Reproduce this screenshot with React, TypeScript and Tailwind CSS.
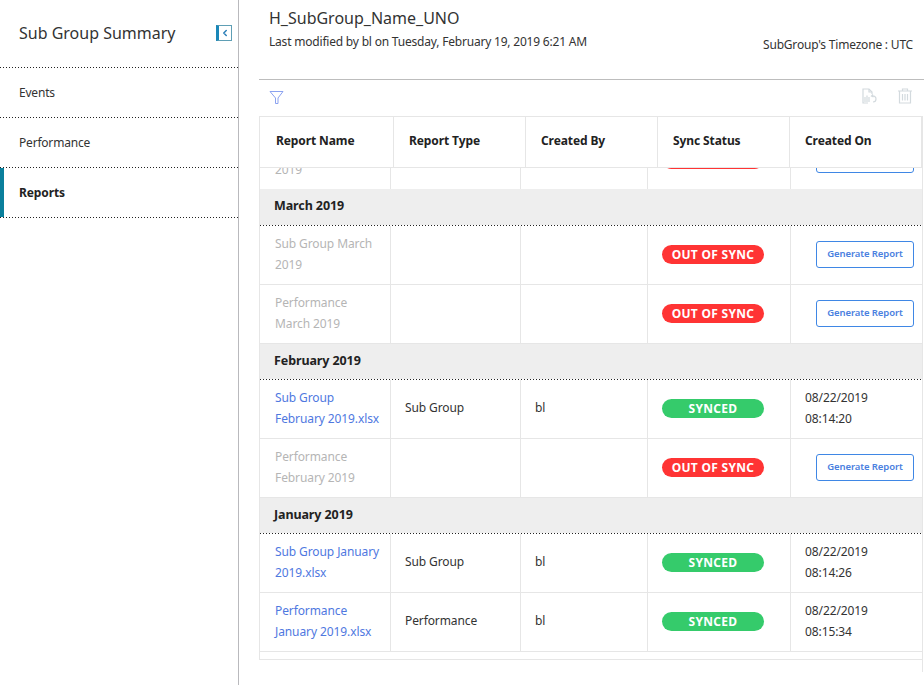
import { ChevronLeft } from "lucide-react"

const cols = "grid grid-cols-[131px_130px_127px_143px_131px] shrink-0"
const cell = "border-r border-b border-[#e6e6e6] flex items-center"
const dots = "h-[1px] shrink-0 bg-[linear-gradient(to_right,#222_1px,transparent_1px)] bg-[length:3px_1px]"

function Badge({ synced }: { synced?: boolean }) {
  return (
    <span className={`w-[102px] h-[19px] rounded-full flex items-center justify-center text-white text-[12px] font-bold tracking-[0.3px] ${synced ? "bg-[#35cb6b]" : "bg-[#ff3434]"}`}>
      {synced ? "SYNCED" : "OUT OF SYNC"}
    </span>
  )
}

function GenerateButton() {
  return (
    <button className="w-[98px] h-[27px] ml-[25px] rounded-[3px] border border-[#3f87e5] bg-white text-[#4a80e0] text-[9.5px] font-semibold pb-[1px]">
      Generate Report
    </button>
  )
}

function PendingRow({ a, b }: { a: string; b: string }) {
  return (
    <div className={`${cols} h-[59px]`}>
      <div className={`${cell} pl-[15px] pb-[2px] text-[#b5b5b5] leading-[21px]`}>
        <div>{a}<br />{b}</div>
      </div>
      <div className={cell}></div>
      <div className={cell}></div>
      <div className={`${cell} pl-[14px] pb-[1px]`}><Badge /></div>
      <div className={`${cell} border-r-0 pb-[1px]`}><GenerateButton /></div>
    </div>
  )
}

function SyncedRow({ a, b, type, time }: { a: string; b: string; type: string; time: string }) {
  return (
    <div className={`${cols} h-[59px]`}>
      <div className={`${cell} pl-[15px] pb-[2px] text-[#4f78df] leading-[21px]`}>
        <div>{a}<br />{b}</div>
      </div>
      <div className={`${cell} pl-[14px] pb-[2px]`}>{type}</div>
      <div className={`${cell} pl-[14px] pb-[2px]`}>bl</div>
      <div className={`${cell} pl-[14px] pb-[1px]`}><Badge synced /></div>
      <div className={`${cell} border-r-0 pl-[14px] pb-[2px] leading-[21px]`}>
        <div>08/22/2019<br />{time}</div>
      </div>
    </div>
  )
}

function GroupRow({ label, h = "h-[36px]" }: { label: string; h?: string }) {
  return (
    <div className={`${h} shrink-0 flex flex-col`}>
      <div className="flex-1 bg-[#eeeeee] pl-[14px] pb-[1px] flex items-center font-bold text-[#222] text-[12.5px]">
        {label}
      </div>
      <div className={dots}></div>
    </div>
  )
}

function NavItem({ label, active }: { label: string; active?: boolean }) {
  return (
    <div className="h-[50px] flex flex-col">
      <div className={`flex-1 flex items-center text-[12px] ${active ? "font-bold text-[#222]" : "pl-[19px] text-[#333] tracking-[-0.2px]"}`}>
        {active && <span className="w-[4px] self-stretch bg-[#0a7f9c] mr-[15px]"></span>}
        {label}
      </div>
      <div className={dots}></div>
    </div>
  )
}

function HeadCell({ label, w, pl }: { label: string; w: string; pl: string }) {
  return (
    <div className={`${w} ${pl} h-[50px] pb-[2px] border-r border-[#e6e6e6] flex items-center font-bold text-[#222] text-[12px]`}>
      {label}
    </div>
  )
}

export default function App() {
  return (
    <div className="w-[924px] h-[685px] flex overflow-hidden bg-white text-[12px] tracking-[-0.1px] text-[#333] font-['Noto_Sans',sans-serif]">
      <aside className="w-[239px] shrink-0 border-r border-[#b9b9bd]">
        <div className="h-[68px] flex flex-col">
          <div className="flex-1 pl-[19px] pr-[6px] pb-[2px] flex items-center justify-between">
            <span className="text-[16px] tracking-normal text-[#333]">Sub Group Summary</span>
            <span className="w-[16px] h-[16px] border border-[#5f9fb5] border-l-[3px] border-l-[#1a87b8] flex items-center justify-center">
              <ChevronLeft size={10} strokeWidth={3.5} className="text-[#2b7fb8]" />
            </span>
          </div>
          <div className={dots}></div>
        </div>
        <NavItem label="Events" />
        <NavItem label="Performance" />
        <NavItem label="Reports" active />
      </aside>

      <main className="flex-1 min-w-0 pl-[20px]">
        <div className="h-[80px] border-b border-[#bdbdbd] pl-[10px] pr-[11px] relative">
          <div className="pt-[7px] text-[16px] tracking-normal leading-[22px] text-[#333]">H_SubGroup_Name_UNO</div>
          <div className="mt-[4px] text-[12px] tracking-[-0.2px] leading-[18px] text-[#333]">Last modified by bl on Tuesday, February 19, 2019 6:21 AM</div>
          <div className="absolute right-[11px] top-[36px] text-[12px] tracking-[-0.2px] leading-[18px] text-[#333]">SubGroup's Timezone : UTC</div>
        </div>

        <div className="h-[36px] pl-[10px] pr-[12px] pb-[2px] flex items-center justify-between">
          <svg width="15" height="15" viewBox="0 0 15 15" fill="none" stroke="#8ba2f0" strokeWidth="1">
            <path d="M1 1.5h13L9 8v5.500H6.500V8z" />
          </svg>
          <div className="flex items-center gap-[20px] mb-[2px]">
            <svg width="16" height="16" viewBox="0 0 16 16" fill="none" stroke="#d3dade" strokeWidth="1.200">
              <path d="M6 15H1V1h6l3 3v2" />
              <path d="M7 1v3h3" />
              <path d="M3 9v5M5 7.500V14M7 9v5" />
              <path d="M10 8a3 3 0 0 1 4 3 3 3 0 0 1-3 3M11 6.500 9.500 8l2 1" />
            </svg>
            <svg width="14" height="16" viewBox="0 0 14 16" fill="none" stroke="#d3dade" strokeWidth="1.200">
              <path d="M0 3h14M4.500 3V1h5v2M1.500 3v12h11V3" />
              <path d="M4.500 6v6.500M7 6v6.500M9.500 6v6.500" />
            </svg>
          </div>
        </div>

        <div className="w-[664px] h-[556px] border-r border-[#e6e6e6]">
          <div className="border-t border-l border-b border-[#e6e6e6]">
            <div className="flex border-b border-[#e6e6e6]">
              <HeadCell label="Report Name" w="w-[134px]" pl="pl-[16px]" />
              <HeadCell label="Report Type" w="w-[132px]" pl="pl-[15px]" />
              <HeadCell label="Created By" w="w-[132px]" pl="pl-[15px]" />
              <HeadCell label="Sync Status" w="w-[132px]" pl="pl-[15px]" />
              <HeadCell label="Created On" w="w-[132px]" pl="pl-[15px]" />
            </div>
            <div className="h-[484px] overflow-hidden flex flex-col justify-end">
              <div className="shrink-0 -mb-[1px]">
                <PendingRow a="Performance April" b="2019" />
              </div>
              <GroupRow label="March 2019" h="h-[37px]" />
              <PendingRow a="Sub Group March" b="2019" />
              <PendingRow a="Performance" b="March 2019" />
              <GroupRow label="February 2019" />
              <SyncedRow a="Sub Group" b="February 2019.xlsx" type="Sub Group" time="08:14:20" />
              <PendingRow a="Performance" b="February 2019" />
              <GroupRow label="January 2019" />
              <SyncedRow a="Sub Group January" b="2019.xlsx" type="Sub Group" time="08:14:26" />
              <SyncedRow a="Performance" b="January 2019.xlsx" type="Performance" time="08:15:34" />
            </div>
            <div className="h-[7px]"></div>
          </div>
        </div>
      </main>
    </div>
  )
}
